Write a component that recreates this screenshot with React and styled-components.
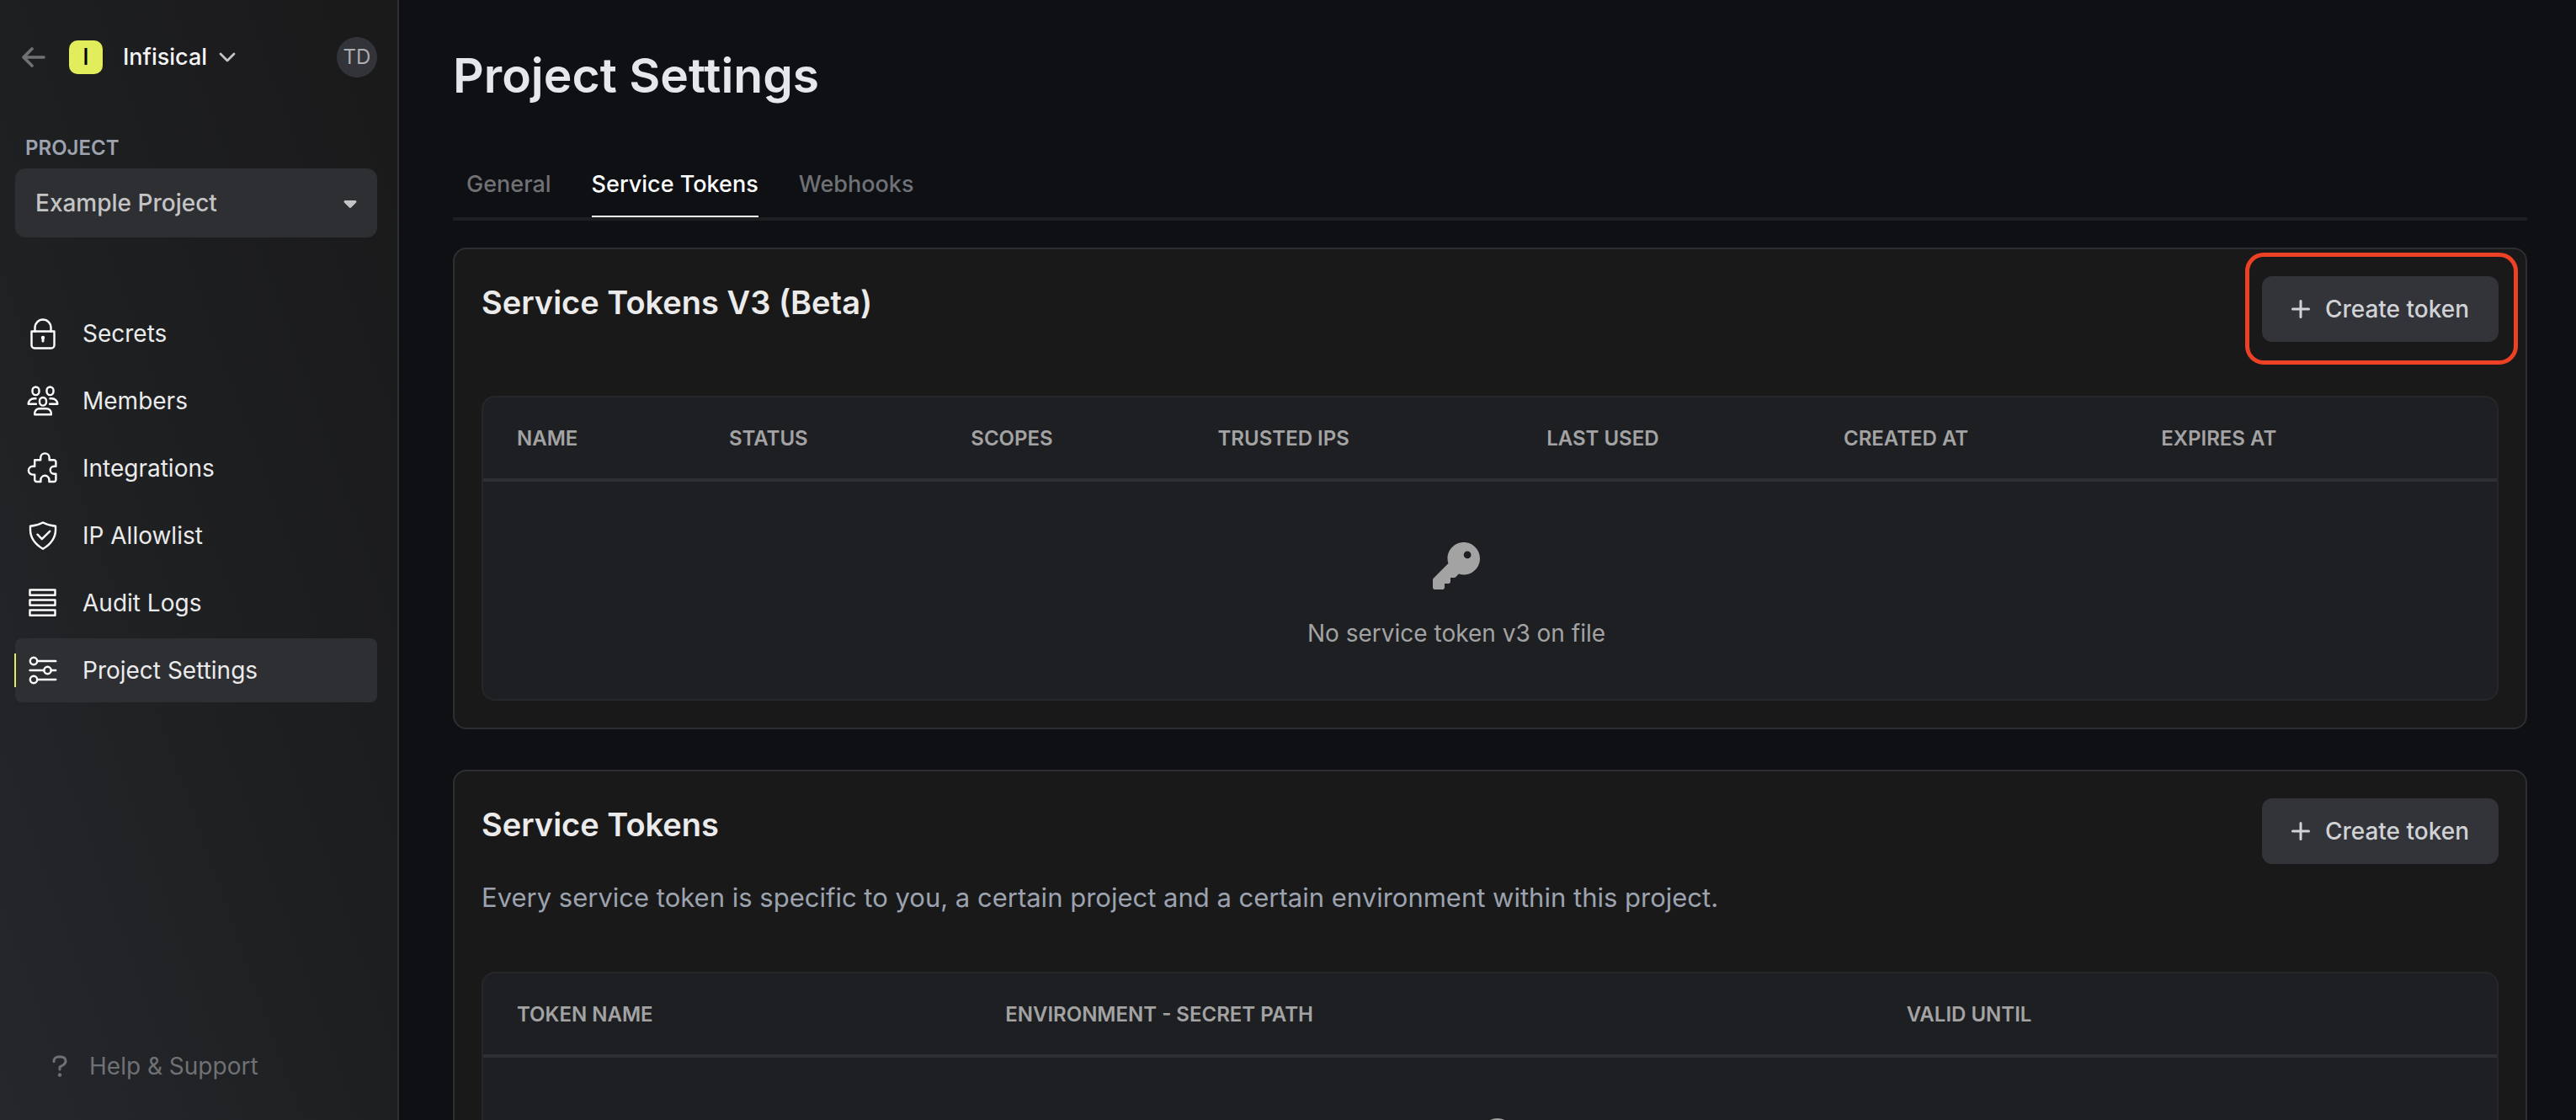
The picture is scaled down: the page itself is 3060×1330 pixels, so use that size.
import React from "react";
import styled, { createGlobalStyle } from "styled-components";
import { FaKey, FaCaretDown } from "react-icons/fa6";

const GlobalStyle = createGlobalStyle`
  *, *::before, *::after { box-sizing: border-box; }
  body {
    margin: 0;
    background: #0e1014;
    color: #ebebeb;
    font-family: Inter, "Liberation Sans", sans-serif;
    font-size: 28px;
    line-height: 40px;
  }
  h1, h2, p, ul { margin: 0; padding: 0; }
  button, select { font: inherit; color: inherit; }
  a { color: inherit; text-decoration: none; }
`;

const Layout = styled.div`
  display: flex;
  height: 100vh;
  overflow: hidden;
`;

const Sidebar = styled.aside`
  flex: none;
  display: flex;
  flex-direction: column;
  width: 474px;
  padding: 44px 24px 44px 18px;
  border-right: 2px solid #2d2f33;
  background: linear-gradient(to top right, #26272b, #1e1f21 50%, #19191a);
`;

const OrgBar = styled.header`
  display: flex;
  align-items: center;
  height: 48px;
  padding-left: 8px;
`;

const PlainButton = styled.button`
  display: flex;
  align-items: center;
  padding: 0;
  border: 0;
  background: none;
  cursor: pointer;
`;

const BackButton = styled(PlainButton)`
  margin-right: 28px;
  color: #707174;
`;

const OrgButton = styled(PlainButton)`
  font-size: 27px;
  font-weight: 500;
  color: #f4f4f5;
`;

const OrgBadge = styled.span`
  display: flex;
  align-items: center;
  justify-content: center;
  width: 40px;
  height: 40px;
  margin-right: 24px;
  border-radius: 10px;
  background: #e1ed5a;
  color: #000;
`;

const OrgChevron = styled.svg`
  margin-left: 14px;
  color: #c4c4c5;
`;

const Avatar = styled(PlainButton)`
  justify-content: center;
  width: 48px;
  height: 48px;
  margin-left: auto;
  border-radius: 50%;
  background: #323439;
  color: #adaeb0;
  font-size: 24px;
`;

const ProjectField = styled.div`
  display: flex;
  flex-direction: column;
  margin-top: 68px;
`;

const ProjectLabel = styled.label`
  padding-left: 12px;
  margin-bottom: 8px;
  font-size: 24px;
  line-height: 32px;
  font-weight: 600;
  color: #9ca3af;
`;

const SelectBox = styled.div`
  display: grid;
  align-items: center;
  height: 82px;
  border-radius: 12px;
  background: #2d2f33;
  color: #c4c4c5;

  > * { grid-area: 1 / 1; }

  > svg {
    justify-self: end;
    margin-right: 20px;
    pointer-events: none;
  }
`;

const ProjectSelect = styled.select`
  width: 100%;
  height: 100%;
  padding: 0 24px;
  border: 0;
  border-radius: 12px;
  appearance: none;
  background: transparent;
  font-weight: 500;

  option { background: #2d2f33; }
`;

const Menu = styled.ul`
  display: flex;
  flex-direction: column;
  gap: 4px;
  margin-top: 76px;
  list-style: none;
`;

const MenuLink = styled.a`
  position: relative;
  display: flex;
  align-items: center;
  gap: 26px;
  height: 76px;
  padding-left: 14px;
  border-radius: 8px;
  background: ${(p) => (p.$active ? "#2d2f33" : "transparent")};

  svg { color: #fff; }

  &::before {
    content: "";
    position: absolute;
    left: -1px;
    width: 2px;
    height: 40px;
    background: ${(p) => (p.$active ? "#e1ed5a" : "transparent")};
  }
`;

const HelpLink = styled.a`
  display: flex;
  align-items: center;
  gap: 26px;
  margin-top: auto;
  padding-left: 44px;
  color: #707174;
`;

const Main = styled.main`
  flex: 1;
  min-width: 0;
  padding: 54px 58px 0 64px;
  overflow-y: auto;
  scrollbar-width: none;
`;

const PageTitle = styled.h1`
  font-size: 57px;
  line-height: 72px;
  font-weight: 600;
  color: #e5e7eb;
`;

const Tabs = styled.nav`
  display: flex;
  gap: 48px;
  margin-top: 54px;
  padding-left: 16px;
  border-bottom: 4px solid #1e1f22;
`;

const Tab = styled.button`
  height: 78px;
  padding: 2px 0 0;
  border: 0;
  border-bottom: 2px solid ${(p) => (p.$active ? "#fff" : "transparent")};
  background: none;
  color: ${(p) => (p.$active ? "#fff" : "#707174")};
  font-size: 27px;
  font-weight: 500;
  cursor: pointer;
`;

const Card = styled.section`
  margin-top: ${(p) => (p.$first ? 32 : 48)}px;
  padding: 32px;
  border: 2px solid #2d2f33;
  border-radius: 16px;
  background: #19191a;
`;

const CardHeader = styled.div`
  display: flex;
  align-items: flex-start;
  justify-content: space-between;
`;

const CardTitle = styled.h2`
  font-size: 38px;
  line-height: 62px;
  font-weight: 600;
`;

const CardText = styled.p`
  margin-top: 16px;
  font-size: 31px;
  line-height: 48px;
  color: #9ca3af;
`;

const CreateButton = styled.button`
  position: relative;
  display: flex;
  align-items: center;
  gap: 18px;
  height: 78px;
  padding: 0 35px;
  border: 0;
  border-radius: 12px;
  background: #323439;
  color: #d1d2d6;
  font-weight: 500;
  cursor: pointer;
`;

const Highlight = styled.span`
  position: absolute;
  inset: -28px -23px -27px -20px;
  border: 5px solid #ec4125;
  border-radius: 22px;
  pointer-events: none;
`;

const TableFrame = styled.div`
  margin-top: 64px;
  border: 2px solid #26272b;
  border-radius: 16px;
  background: #1e1f22;
  overflow: hidden;
`;

const Table = styled.table`
  width: 100%;
  border-collapse: separate;
  border-spacing: 0;
  color: #a3a3a4;
`;

const HeadCell = styled.th`
  height: 100px;
  padding: 2px 40px 0;
  border-bottom: 4px solid #2d2f33;
  text-align: left;
  white-space: nowrap;
  font-size: 24px;
  line-height: 32px;
  font-weight: 600;
`;

const NarrowHeadCell = styled(HeadCell)`
  width: 40px;
`;

const EmptyCell = styled.td`
  padding: 72px 40px 58px;
`;

const EmptyState = styled.div`
  display: flex;
  flex-direction: column;
  align-items: center;
  gap: 32px;
`;

const iconProps = {
  width: 40,
  height: 40,
  viewBox: "0 0 40 40",
  fill: "none",
  stroke: "currentColor",
  strokeWidth: 2.4,
  strokeLinejoin: "round",
  strokeLinecap: "round",
  "aria-hidden": true,
};

const LockIcon = () => (
  <svg {...iconProps}>
    <path d="M5.5 17.5h27v16.500a3.500 3.500 0 0 1-3.500 3.500H9a3.500 3.500 0 0 1-3.500-3.500z" />
    <path d="M9.500 17.500v-4.500a9.500 9.500 0 0 1 19 0v4.500" />
    <circle cx="19" cy="25" r="2.200" fill="currentColor" stroke="none" />
    <path d="M19 25.500v3.700" strokeWidth="2.800" />
  </svg>
);

const MembersIcon = () => (
  <svg {...iconProps}>
    <rect x="6.500" y="3.500" width="8" height="9.600" rx="4" />
    <rect x="23.500" y="3.500" width="8" height="9.600" rx="4" />
    <rect x="15" y="16" width="8" height="9.600" rx="4" />
    <path d="M10.500 17.200H8.300a6.600 6.600 0 0 0-6.600 6.600h9.200M27.500 17.200h2.200a6.600 6.600 0 0 1 6.600 6.600h-9.200" />
    <path d="M9.200 36.200v-1.400a5.600 5.600 0 0 1 5.600-5.600h8.400a5.600 5.600 0 0 1 5.600 5.600v1.400z" />
  </svg>
);

const PuzzleIcon = () => (
  <svg {...iconProps}>
    <path d="M9.200 10.200h7v-2.600a5.100 5.100 0 0 1 10.400 0v2.600h5.400a2.400 2.400 0 0 1 2.400 2.400v5.200h-2.200a4.500 4.500 0 0 0 0 9h2.200v6.800a2.400 2.400 0 0 1-2.400 2.400h-5.600v-2.200a5 5 0 0 0-10 0v2.200h-4.800a2.400 2.400 0 0 1-2.400-2.400v-6h-2.400a4.900 4.900 0 0 1 0-9.800h2.400z" />
  </svg>
);

const ShieldIcon = () => (
  <svg {...iconProps}>
    <path d="M19 4.500c-4.800 2.600-9.600 4-15 4.300v4.400c0 9.600 5.800 17 15 22.600 9.200-5.600 15-13 15-22.600V8.800c-5.400-.3-10.200-1.700-15-4.300z" />
    <path d="M12.500 18.700l5.300 5.500 9.400-9.400" />
  </svg>
);

const ListIcon = () => (
  <svg {...iconProps}>
    <path d="M3.500 4.500h30v6.200h-30zM3.500 16.500h30v6.200h-30zM3.500 28.500h30v6.200h-30z" />
  </svg>
);

const SlidersIcon = () => (
  <svg {...iconProps}>
    <circle cx="8" cy="9" r="4.200" />
    <circle cx="24.500" cy="20" r="4.200" />
    <circle cx="8" cy="31" r="4.200" />
    <path d="M12.200 9h22M3.500 20h16.800M28.700 20h5.500M12.200 31h22" />
  </svg>
);

const menuItems = [
  { label: "Secrets", Icon: LockIcon },
  { label: "Members", Icon: MembersIcon },
  { label: "Integrations", Icon: PuzzleIcon },
  { label: "IP Allowlist", Icon: ShieldIcon },
  { label: "Audit Logs", Icon: ListIcon },
  { label: "Project Settings", Icon: SlidersIcon, active: true },
];

const CreateToken = ({ highlighted }) => (
  <CreateButton type="button">
    <svg width="22" height="22" viewBox="0 0 22 22" fill="none" stroke="currentColor" strokeWidth="3" strokeLinecap="round" aria-hidden="true">
      <path d="M11 1.500v19M1.500 11h19" />
    </svg>
    Create token
    {highlighted && <Highlight />}
  </CreateButton>
);

const TokenTable = ({ columns, narrowLast, emptyText }) => (
  <TableFrame>
    <Table>
      <thead>
        <tr>
          {columns.map((name) => (
            <HeadCell key={name} scope="col">{name}</HeadCell>
          ))}
          {narrowLast ? <NarrowHeadCell as="td" /> : <HeadCell as="td" />}
        </tr>
      </thead>
      <tbody>
        <tr>
          <EmptyCell colSpan={narrowLast ? columns.length : columns.length + 1}>
            <EmptyState>
              <FaKey size={56} aria-hidden="true" />
              <span>{emptyText}</span>
            </EmptyState>
          </EmptyCell>
        </tr>
      </tbody>
    </Table>
  </TableFrame>
);

export default function App() {
  return (
    <>
      <GlobalStyle />
      <Layout>
        <Sidebar>
          <OrgBar>
            <BackButton type="button" aria-label="Back">
              <svg width="28" height="24" viewBox="0 0 28 24" fill="none" stroke="currentColor" strokeWidth="3.600" strokeLinecap="round" strokeLinejoin="round">
                <path d="M12 2L2 12l10 10M2.500 12H26" />
              </svg>
            </BackButton>
            <OrgButton type="button">
              <OrgBadge>I</OrgBadge>
              Infisical
              <OrgChevron width="20" height="12" viewBox="0 0 20 12" fill="none" stroke="currentColor" strokeWidth="2.800" strokeLinecap="round" strokeLinejoin="round">
                <path d="M2 2l8 8 8-8" />
              </OrgChevron>
            </OrgButton>
            <Avatar type="button">TD</Avatar>
          </OrgBar>
          <ProjectField>
            <ProjectLabel htmlFor="project">PROJECT</ProjectLabel>
            <SelectBox>
              <ProjectSelect id="project" defaultValue="example">
                <option value="example">Example Project</option>
              </ProjectSelect>
              <FaCaretDown width={18} size={24} aria-hidden="true" />
            </SelectBox>
          </ProjectField>
          <Menu>
            {menuItems.map(({ label, Icon, active }) => (
              <li key={label}>
                <MenuLink href="#" $active={active}>
                  <Icon />
                  {label}
                </MenuLink>
              </li>
            ))}
          </Menu>
          <HelpLink href="#">
            <svg width="18" height="26" viewBox="0 0 18 26" fill="none" stroke="currentColor" strokeWidth="3" strokeLinecap="round" strokeLinejoin="round" aria-hidden="true">
              <path d="M2 7.500C2 4 4.500 2 7.500 2h3C13.800 2 16 4.200 16 7c0 2.200-1.200 3.600-3 4.700L9 14v3" />
              <circle cx="9" cy="23.500" r="2.200" fill="currentColor" stroke="none" />
            </svg>
            Help &amp; Support
          </HelpLink>
        </Sidebar>
        <Main>
          <PageTitle>Project Settings</PageTitle>
          <Tabs>
            <Tab type="button">General</Tab>
            <Tab type="button" $active>Service Tokens</Tab>
            <Tab type="button">Webhooks</Tab>
          </Tabs>
          <Card $first>
            <CardHeader>
              <CardTitle>Service Tokens V3 (Beta)</CardTitle>
              <CreateToken highlighted />
            </CardHeader>
            <TokenTable
              columns={["NAME", "STATUS", "SCOPES", "TRUSTED IPS", "LAST USED", "CREATED AT", "EXPIRES AT"]}
              narrowLast
              emptyText="No service token v3 on file"
            />
          </Card>
          <Card>
            <CardHeader>
              <CardTitle>Service Tokens</CardTitle>
              <CreateToken />
            </CardHeader>
            <CardText>
              Every service token is specific to you, a certain project and a certain environment within this project.
            </CardText>
            <TokenTable
              columns={["TOKEN NAME", "ENVIRONMENT - SECRET PATH", "VALID UNTIL"]}
              emptyText="No service tokens found"
            />
          </Card>
        </Main>
      </Layout>
    </>
  );
}
